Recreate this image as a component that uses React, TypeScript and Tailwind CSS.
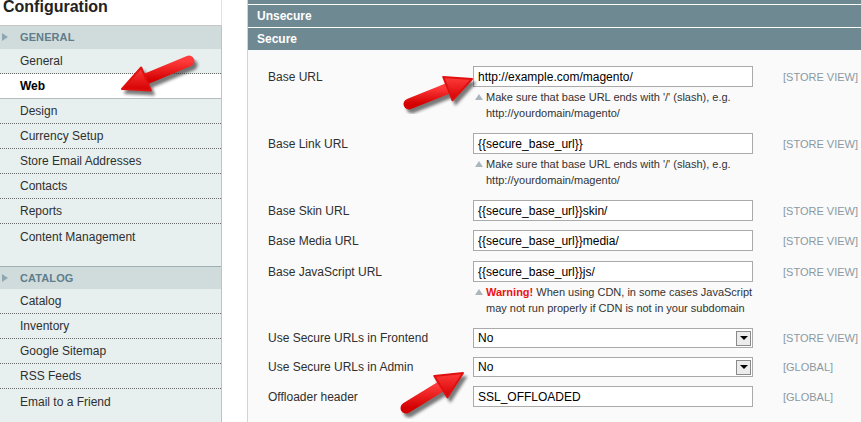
import React from "react";

type Pt = [number, number];

function Arrow({ tail, tip }: { tail: Pt; tip: Pt }) {
  const dx = tip[0] - tail[0];
  const dy = tip[1] - tail[1];
  const len = Math.hypot(dx, dy);
  const ux = dx / len;
  const uy = dy / len;
  const hl = 26;
  const hw = 12.5;
  const bx = tip[0] - ux * hl;
  const by = tip[1] - uy * hl;
  const px = -uy;
  const py = ux;
  const head = `${tip[0]},${tip[1]} ${bx + px * hw},${by + py * hw} ${bx - px * hw},${by - py * hw}`;
  const sx = bx + ux * 3;
  const sy = by + uy * 3;
  return (
    <g>
      <g transform="translate(3,4)" opacity="0.6" filter="url(#blur)">
        <line x1={tail[0]} y1={tail[1]} x2={sx} y2={sy} stroke="#222" strokeWidth="11" strokeLinecap="round" />
        <polygon points={head} fill="#222" strokeLinejoin="round" stroke="#222" strokeWidth="2" />
      </g>
      <line x1={tail[0]} y1={tail[1]} x2={sx} y2={sy} stroke="url(#redg)" strokeWidth="11" strokeLinecap="round" />
      <polygon points={head} fill="url(#redg)" stroke="#e01010" strokeWidth="2" strokeLinejoin="round" />
    </g>
  );
}

const generalItems = [
  "General",
  "Web",
  "Design",
  "Currency Setup",
  "Store Email Addresses",
  "Contacts",
  "Reports",
  "Content Management",
];
const catalogItems = ["Catalog", "Inventory", "Google Sitemap", "RSS Feeds", "Email to a Friend"];

function SectionHead({ title, top }: { title: string; top?: boolean }) {
  return (
    <div
      className={
        "h-[23px] bg-[#d0dcdc] flex items-center relative " +
        (top ? "" : "border-t border-[#9fb0b5]")
      }
    >
      <span className="absolute left-[2px] top-[7px] w-0 h-0 border-y-[4px] border-y-transparent border-l-[6px] border-l-[#8fa7b0]" />
      <span className="pl-[20px] text-[11px] font-bold text-[#5f7d8b] tracking-[0.1px]">{title}</span>
    </div>
  );
}

function Items({ items, active }: { items: string[]; active?: string }) {
  return (
    <div>
      {items.map((it, i) => {
        const last = i === items.length - 1;
        const isActive = it === active;
        let border = "";
        if (!last) {
          if (isActive) border = "border-b border-solid border-[#b3bdbf]";
          else border = "border-b border-dotted border-[#6a6a6a]";
        }
        return (
          <div
            key={it}
            className={
              "h-[25px] pl-[20px] flex items-center text-[12px] text-[#2f2f2f] " +
              border +
              (isActive ? " bg-white font-bold text-black" : "")
            }
          >
            {it}
          </div>
        );
      })}
    </div>
  );
}

function Note({ children }: { children: React.ReactNode }) {
  return (
    <div className="pt-[2px] pb-[3px] text-[11px] leading-[16px] text-[#333] flex">
      <span className="w-[13px] shrink-0 pl-[2px] pt-[5px]">
        <span className="block w-0 h-0 border-x-[4px] border-x-transparent border-b-[6px] border-b-[#a9b7bd]" />
      </span>
      <div>{children}</div>
    </div>
  );
}

function TextInput({ value }: { value: string }) {
  return (
    <div className="w-[280px] h-[21px] border border-[#aaaaaa] bg-white flex items-center pl-[4px] text-[12px] text-black whitespace-nowrap overflow-hidden">
      {value}
    </div>
  );
}

function SelectInput({ value }: { value: string }) {
  return (
    <div className="w-[280px] h-[20px] border border-[#aaaaaa] bg-white flex items-center pl-[4px] pr-[1px] text-[12px] text-black">
      <span className="flex-1">{value}</span>
      <span className="w-[15px] h-[15px] border border-[#8a8a8a] bg-[#ececec] flex items-center justify-center">
        <span className="block w-0 h-0 border-x-[4px] border-x-transparent border-t-[4px] border-t-black" />
      </span>
    </div>
  );
}

function Row({
  label,
  scope,
  children,
  note,
  select,
  mb,
}: {
  label: string;
  scope: string;
  children: React.ReactNode;
  note?: React.ReactNode;
  select?: boolean;
  mb?: string;
}) {
  const h = select ? "h-[20px] leading-[21px]" : "h-[21px] leading-[22px]";
  return (
    <div className={"flex items-start " + (mb ?? "mb-[9px]")}>
      <div className={"w-[205px] text-[12px] text-[#2f2f2f] " + h}>{label}</div>
      <div className="w-[280px]">
        {children}
        {note}
      </div>
      <div className={"pl-[30px] text-[11px] text-[#8a99a2] " + h}>{scope}</div>
    </div>
  );
}

export default function App() {
  return (
    <div className="relative w-[861px] h-[422px] overflow-hidden bg-white flex font-['Liberation_Sans',Arial,sans-serif]">
      {/* Sidebar */}
      <div className="w-[222px] shrink-0 flex flex-col">
        <div className="h-[26px] border-b border-[#c5c5c5] border-r border-r-[#e2e2e2] pl-[3px] overflow-hidden">
          <div className="text-[16px] font-bold leading-[16px] mt-[-1px] text-[#222]">Configuration</div>
        </div>
        <div className="flex-1 bg-[#e7efef] border-r border-[#b9c4c6]">
          <SectionHead title="GENERAL" top />
          <Items items={generalItems} active="Web" />
          <div className="h-[17px]" />
          <SectionHead title="CATALOG" />
          <Items items={catalogItems} />
        </div>
      </div>
      <div className="w-[25px] shrink-0" />
      {/* Main */}
      <div className="flex-1 border-l border-[#d4d4d4] bg-[#fafafa] flex flex-col">
        <div className="h-[4px] bg-[#6f8992]" />
        <div className="h-[1px] bg-white" />
        <div className="h-[22px] bg-[#6f8992] flex items-center pl-[9px] text-[12px] font-bold text-white">Unsecure</div>
        <div className="h-[1px] bg-white" />
        <div className="h-[22px] bg-[#6f8992] flex items-center pl-[9px] text-[12px] font-bold text-white">Secure</div>
        <div className="pt-[16px] pl-[20px]">
          <Row
            label="Base URL"
            scope="[STORE VIEW]"
            note={
              <Note>
                Make sure that base URL ends with '/' (slash), e.g.
                <br />
                http://yourdomain/magento/
              </Note>
            }
          >
            <TextInput value="http://example.com/magento/" />
          </Row>
          <Row
            label="Base Link URL"
            scope="[STORE VIEW]"
            note={
              <Note>
                Make sure that base URL ends with '/' (slash), e.g.
                <br />
                http://yourdomain/magento/
              </Note>
            }
          >
            <TextInput value="{{secure_base_url}}" />
          </Row>
          <Row label="Base Skin URL" scope="[STORE VIEW]">
            <TextInput value="{{secure_base_url}}skin/" />
          </Row>
          <Row label="Base Media URL" scope="[STORE VIEW]" mb="mb-[10px]">
            <TextInput value="{{secure_base_url}}media/" />
          </Row>
          <Row
            label="Base JavaScript URL"
            scope="[STORE VIEW]"
            note={
              <Note>
                <span className="font-bold text-[#ee1111]">Warning!</span> When using CDN, in some cases JavaScript
                <br />
                may not run properly if CDN is not in your subdomain
              </Note>
            }
          >
            <TextInput value="{{secure_base_url}}js/" />
          </Row>
          <Row label="Use Secure URLs in Frontend" scope="[STORE VIEW]" select mb="mb-[9px]">
            <SelectInput value="No" />
          </Row>
          <Row label="Use Secure URLs in Admin" scope="[GLOBAL]" select mb="mb-[9px]">
            <SelectInput value="No" />
          </Row>
          <Row label="Offloader header" scope="[GLOBAL]">
            <TextInput value="SSL_OFFLOADED" />
          </Row>
        </div>
      </div>

      {/* Annotation arrows */}
      <svg className="absolute inset-0 pointer-events-none" width="861" height="422" viewBox="0 0 861 422">
        <defs>
          <linearGradient id="redg" x1="0" y1="0" x2="0" y2="1">
            <stop offset="0" stopColor="#ff3b3b" />
            <stop offset="1" stopColor="#d40000" />
          </linearGradient>
          <filter id="blur" x="-20%" y="-20%" width="140%" height="140%">
            <feGaussianBlur stdDeviation="1.6" />
          </filter>
        </defs>
        <Arrow tail={[189, 61]} tip={[122, 89]} />
        <Arrow tail={[409, 104]} tip={[472, 79]} />
        <Arrow tail={[406, 408]} tip={[463, 373]} />
      </svg>
    </div>
  );
}
